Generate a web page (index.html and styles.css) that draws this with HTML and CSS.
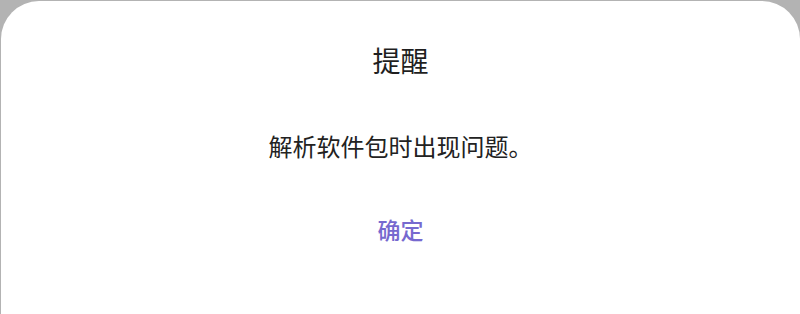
FILE: index.html
```html
<!DOCTYPE html>
<html lang="zh-CN">
<head>
<meta charset="utf-8">
<link rel="stylesheet" href="styles.css">
</head>
<body>
<div class="dialog">
  <div class="title">提醒</div>
  <div class="message">解析软件包时出现问题。</div>
  <div class="actions"><span class="btn">确定</span></div>
</div>
</body>
</html>
```
FILE: styles.css
```css
html, body {
  margin: 0;
  padding: 0;
  width: 800px;
  height: 314px;
  overflow: hidden;
  background: #b3b3b3;
}
body {
  font-family: "Noto Sans CJK SC", "Noto Sans", sans-serif;
}
.dialog {
  margin: 1px 0 0 1px;
  width: 799px;
  height: 313px;
  background: #ffffff;
  border-radius: 38px 38px 0 0;
  display: flex;
  flex-direction: column;
  align-items: center;
  box-sizing: border-box;
  padding-top: 39px;
}
.title {
  font-size: 28px;
  line-height: 40px;
  color: #1f1f1f;
}
.message {
  margin-top: 49px;
  font-size: 24px;
  line-height: 34px;
  color: #222222;
}
.actions {
  margin-top: 50px;
}
.btn {
  font-size: 23px;
  line-height: 32px;
  color: #7669cf;
  font-weight: 500;
}
```
